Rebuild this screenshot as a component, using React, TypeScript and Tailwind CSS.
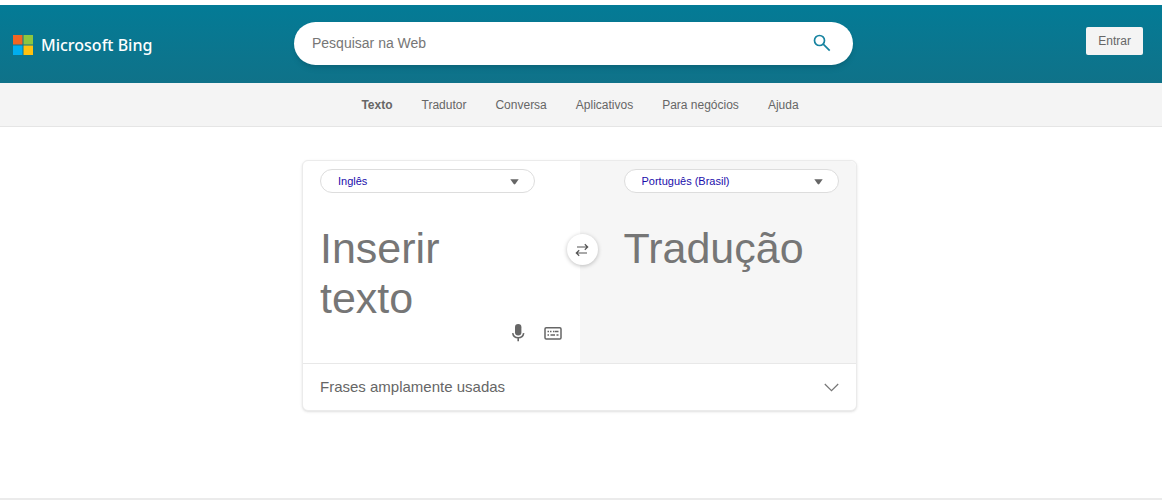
import { useState } from 'react';

const navLinks = ['Texto', 'Tradutor', 'Conversa', 'Aplicativos', 'Para negócios', 'Ajuda'];
const languages = ['Inglês', 'Português (Brasil)', 'Espanhol', 'Francês'];

export default function App() {
    return (
        <div className="min-h-screen flex flex-col bg-white pt-[5px] font-['Liberation_Sans',Arial,sans-serif] text-[#666]">
            <Header />
            <Navigation />
            <main className="flex-1 pt-[34px] pr-[3px] pb-10">
                <Translator />
            </main>
            <footer className="h-0.5 bg-[#ebebeb]" />
        </div>
    );
}

function Header() {
    const [query, setQuery] = useState('');

    return (
        <header className="grid grid-cols-[1fr_minmax(0,559px)_1fr] items-start pt-[17px] pb-[18px] pl-1 pr-[19px] bg-linear-to-b from-[#037b96] to-[#0f7289]">
            <a href="#" className="flex items-center gap-2 ml-[9px] mt-[11px] text-white font-['Noto_Sans',sans-serif] font-medium text-base leading-6 whitespace-nowrap">
                <svg width="20" height="20" viewBox="0 0 20 20" aria-hidden="true">
                    <path fill="#f26522" d="M0 0h9.5v9.5H0z" />
                    <path fill="#8dc63f" d="M10.5 0H20v9.5h-9.5z" />
                    <path fill="#00aeef" d="M0 10.5h9.5V20H0z" />
                    <path fill="#ffc20e" d="M10.5 10.5H20V20h-9.5z" />
                </svg>
                Microsoft Bing
            </a>

            <form
                role="search"
                className="flex items-center h-[43px] pl-[18px] pr-[22px] pb-0.5 rounded-full bg-white shadow-md"
                onSubmit={(e) => e.preventDefault()}>
                <input
                    type="search"
                    aria-label="Pesquisar na Web"
                    placeholder="Pesquisar na Web"
                    value={query}
                    className="flex-1 min-w-0 text-sm outline-none placeholder:text-[#767676]"
                    onChange={(e) => setQuery(e.target.value)}
                />
                <button type="submit" aria-label="Pesquisar">
                    <svg width="18" height="18" viewBox="0 0 18 18" fill="none" stroke="#1683a0" strokeWidth="1.7" aria-hidden="true">
                        <circle cx="6.5" cy="6.5" r="5" />
                        <path d="M10.2 10.2L16.7 16.7" />
                    </svg>
                </button>
            </form>

            <button className="justify-self-end mt-[5px] h-7 px-3 rounded-xs bg-[#f4f4f4] text-xs">
                Entrar
            </button>
        </header>
    );
}

function Navigation() {
    return (
        <nav className="flex justify-center gap-[29px] h-11 pr-0.5 items-center bg-[#f4f4f4] border-b border-[#e5e5e5] text-xs">
            {navLinks.map((link, i) => (
                <a key={link} href="#" className={i === 0 ? 'font-bold' : ''}>
                    {link}
                </a>
            ))}
        </nav>
    );
}

function Translator() {
    const [text, setText] = useState('');

    return (
        <section className="relative max-w-[555px] mx-auto -mt-px rounded-md bg-white border border-[#ebebeb] shadow-sm">
            <div className="grid grid-cols-2 border-b border-[#e8e8e8]">
                <div className="pt-2 pl-[17px] pb-5 pr-[18px]">
                    <LanguageSelect label="Idioma de origem" initial="Inglês" />
                    <textarea
                        aria-label="Inserir texto"
                        placeholder="Inserir texto"
                        value={text}
                        rows={2}
                        className="block mt-[30px] w-[215px] h-[100px] resize-none overflow-hidden text-[43px] leading-[50px] outline-none placeholder:text-[#767676]"
                        onChange={(e) => setText(e.target.value)}
                    />
                    <div className="flex justify-end items-center gap-[18px]">
                        <button aria-label="Falar">
                            <svg width="16" height="20" viewBox="0 0 16 20" fill="none" aria-hidden="true">
                                <rect x="5" y="1" width="6.4" height="11.5" rx="3.2" fill="#666" />
                                <path d="M2.7 10.2c.5 2.9 2.7 4.6 5.5 4.6s5-1.7 5.5-4.6M8.2 15v3.2" stroke="#666" strokeWidth="1.6" />
                            </svg>
                        </button>
                        <button aria-label="Teclado">
                            <svg width="18" height="20" viewBox="0 0 18 20" fill="none" stroke="#666" aria-hidden="true">
                                <rect x="1" y="4.7" width="16" height="11.2" rx="1.2" strokeWidth="1.5" />
                                <path d="M3.5 8.5h1.5M6 8.5h1.5M9 8.5h1.5M11 8.5h3.5M3.5 12h1.5M6.5 12h4.5M12.5 12h2" strokeWidth="1.3" />
                            </svg>
                        </button>
                    </div>
                </div>
                <div className="pt-2 pl-11 rounded-tr-md bg-[#f6f6f6]">
                    <LanguageSelect label="Idioma de destino" initial="Português (Brasil)" />
                    <output className="block mt-[30px] text-[43px] leading-[50px] text-[#767676]">Tradução</output>
                </div>
            </div>

            <button
                aria-label="Trocar idiomas"
                className="absolute left-1/2 top-[73px] ml-[-13px] size-[31px] flex items-center justify-center rounded-full bg-white shadow-[0_1px_4px_rgba(0,0,0,0.25)]">
                <svg width="14" height="14" viewBox="0 0 14 14" fill="none" stroke="#555" strokeWidth="1.2" aria-hidden="true">
                    <path d="M2 4h10.7M9.8 1.2L12.7 4L9.8 6.8M12 10H1.3M4.2 7.2L1.3 10L4.2 12.8" />
                </svg>
            </button>

            <button className="flex w-full items-center justify-between h-[46px] px-[17px] text-[15px]">
                <span>Frases amplamente usadas</span>
                <svg width="15" height="9" viewBox="0 0 15 9" fill="none" stroke="#767676" strokeWidth="1.2" aria-hidden="true">
                    <path d="M.8 1L7.5 7.7L14.2 1" />
                </svg>
            </button>
        </section>
    );
}

function LanguageSelect({ label, initial }: { label: string; initial: string }) {
    const [language, setLanguage] = useState(initial);

    return (
        <div className="relative w-[215px]">
            <select
                aria-label={label}
                value={language}
                className="block w-full h-6 px-[17px] appearance-none rounded-full border border-[#ddd] bg-white text-[11px] text-[#1a0dab]"
                onChange={(e) => setLanguage(e.target.value)}>
                {languages.map((name) => (
                    <option key={name}>{name}</option>
                ))}
            </select>
            <svg className="absolute right-4 top-2.5 pointer-events-none" width="9" height="6" viewBox="0 0 9 6" aria-hidden="true">
                <path d="M.3.3h8.4L5.3 5q-.8.8-1.6 0z" fill="#666" />
            </svg>
        </div>
    );
}
